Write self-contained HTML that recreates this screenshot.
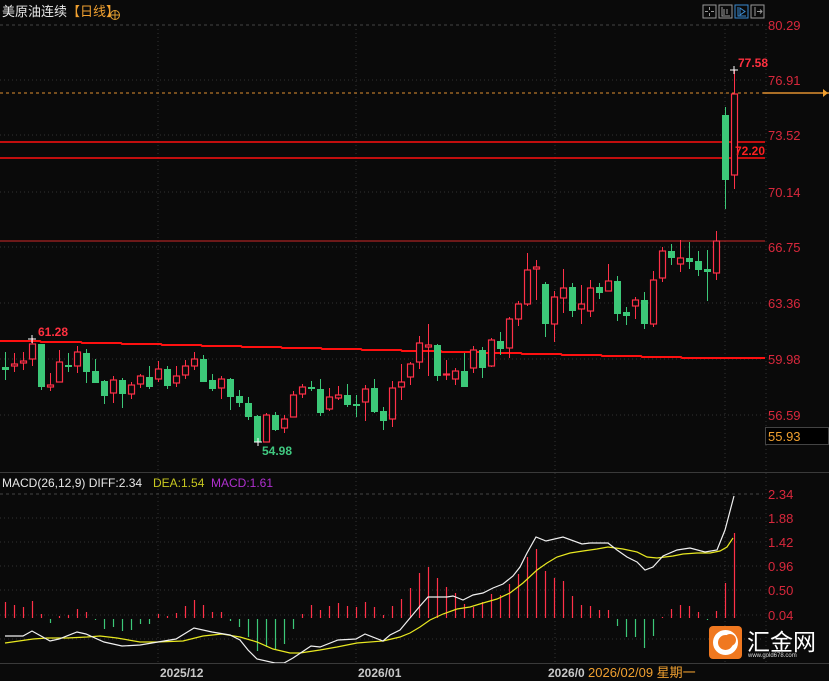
<!DOCTYPE html>
<html><head><meta charset="utf-8"><style>
html,body{margin:0;padding:0;background:#0a0a0a;width:829px;height:681px;overflow:hidden}
svg{display:block}
text{font-family:"Liberation Sans","Noto Sans CJK SC",sans-serif}
</style></head><body>
<svg id="s" width="829" height="681" xmlns="http://www.w3.org/2000/svg">
<rect width="829" height="681" fill="#0a0a0a"/>
<text x="2" y="16" font-size="13" fill="#e8e8e8">美原油连续</text>
<text x="67" y="16" font-size="13" fill="#f0a030">【日线】</text>
<circle cx="115" cy="15" r="4.5" fill="none" stroke="#e0a030" stroke-width="1"/>
<line x1="110.5" y1="15" x2="119.5" y2="15" stroke="#e0a030"/>
<line x1="115" y1="10.5" x2="115" y2="19.5" stroke="#e0a030"/>
<line x1="0" y1="25" x2="763" y2="25" stroke="#444" stroke-dasharray="3,3"/>
<g stroke="#333" stroke-dasharray="1,3">
<line x1="0" y1="80" x2="763" y2="80"/><line x1="0" y1="135" x2="763" y2="135"/>
<line x1="0" y1="192" x2="763" y2="192"/><line x1="0" y1="247" x2="763" y2="247"/>
<line x1="0" y1="303" x2="763" y2="303"/><line x1="0" y1="359" x2="763" y2="359"/>
<line x1="0" y1="415" x2="763" y2="415"/>
<line x1="158" y1="25" x2="158" y2="663"/><line x1="356" y1="25" x2="356" y2="663"/><line x1="555" y1="25" x2="555" y2="663"/><line x1="725" y1="25" x2="725" y2="663"/>
<line x1="766" y1="25" x2="766" y2="663"/>
<line x1="0" y1="518" x2="763" y2="518"/><line x1="0" y1="542" x2="763" y2="542"/>
<line x1="0" y1="566" x2="763" y2="566"/><line x1="0" y1="590" x2="763" y2="590"/>
<line x1="0" y1="615" x2="763" y2="615"/><line x1="0" y1="639" x2="763" y2="639"/>
</g>
<line x1="0" y1="494" x2="763" y2="494" stroke="#444" stroke-dasharray="3,3"/>
<!-- toolbar -->
<g fill="none" stroke="#999">
<rect x="703" y="5" width="13" height="13"/><rect x="719" y="5" width="13" height="13"/>
<rect x="735" y="5" width="13" height="13" stroke="#3a8ad0"/><rect x="751" y="5" width="13" height="13"/>
<path d="M709.5 7v3M709.5 13v3M705 11.5h3M711 11.5h3"/>
<path d="M722 7v9h8M724 9v6M727 9v5" />
<path d="M738 7v9h8M740 8l5 3.5-5 3.5z" stroke="#3a8ad0"/>
<path d="M755 7v9M757 11.5h5M760 9.5l2 2-2 2"/>
</g>
<!-- axis labels -->
<g font-size="13" fill="#d8283c">
<text x="768" y="30">80.29</text><text x="768" y="85">76.91</text><text x="768" y="140">73.52</text>
<text x="768" y="197">70.14</text><text x="768" y="252">66.75</text><text x="768" y="308">63.36</text>
<text x="768" y="364">59.98</text><text x="768" y="420">56.59</text>
<text x="768" y="499">2.34</text><text x="768" y="523">1.88</text><text x="768" y="547">1.42</text>
<text x="768" y="571">0.96</text><text x="768" y="595">0.50</text><text x="768" y="620">0.04</text>
</g>
<rect x="765.5" y="427.5" width="63" height="17" fill="#000" stroke="#444"/>
<text x="768" y="441" font-size="13" fill="#f0a030">55.93</text>
<!-- lines -->
<line x1="0" y1="93" x2="763" y2="93" stroke="#e09030" stroke-dasharray="3,3"/>
<line x1="763" y1="93" x2="829" y2="93" stroke="#e09030" stroke-width="1.5"/>
<path d="M823 89l5 4-5 4z" fill="#f0a030"/>
<line x1="0" y1="142" x2="765" y2="142" stroke="#ff1010" stroke-width="1.5"/>
<line x1="0" y1="158" x2="765" y2="158" stroke="#ff1010" stroke-width="1.5"/>
<line x1="0" y1="241" x2="765" y2="241" stroke="#d02828" stroke-width="1"/>
<path d="M0 341L40 341L41 342L81 342L82 343L121 343L122 344L161 344L162 345L201 345L202 346L241 346L242 347L281 347L282 348L321 348L322 349L361 349L362 350L401 350L402 351L441 351L442 352L481 352L482 353L521 353L522 354L561 354L562 355L601 355L602 356L641 356L642 357L681 357L682 358L765 358" fill="none" stroke="#ff1010" stroke-width="2"/>
<g id="c"></g>
<g id="m"></g>
<line x1="0" y1="472.5" x2="829" y2="472.5" stroke="#3a3a3a"/>
<text x="2" y="487" font-size="12" fill="#e8e8e8">MACD(26,12,9) DIFF:2.34</text>
<text x="153" y="487" font-size="12" fill="#c8c820">DEA:1.54</text>
<text x="211" y="487" font-size="12" fill="#b030d0">MACD:1.61</text>
<polyline fill="none" stroke="#e8e820" stroke-width="1.2" points="5,643 33,639 47,638 67,638 87,637 100,636 117,638 140,642 157,642 183,641 203,636 222,634 240,637 257,642 273,649 290,653 300,653 320,650 337,647 357,643 383,641 400,637 410,633 420,627 430,620 443,614 457,609 470,607 483,603 497,599 510,593 523,583 537,570 547,563 557,557 570,553 583,551 597,549 608,547 623,549 637,552 647,557 657,558 673,556 683,554 697,553 710,553 720,551 727,547 733,538"/>
<polyline fill="none" stroke="#f0f0f0" stroke-width="1.2" points="5,636 23,636 32,631 41,636 50,641 59,639 77,632 86,634 104,642 122,646 140,645 158,642 176,639 194,628 212,632 230,635 240,640 248,650 257,659 275,663 284,663 293,658 302,652 311,646 320,647 338,640 356,639 365,634 383,641 390,635 400,630 410,618 420,606 428,597 440,597 447,597 453,596 463,600 473,595 483,593 493,588 503,584 513,576 520,567 527,553 536,537 546,541 563,537 582,544 590,543 608,543 617,550 627,557 637,562 645,570 653,567 663,556 677,550 690,548 705,552 717,550 725,530 734,496"/>
<!-- bottom axis -->
<line x1="0" y1="663.5" x2="829" y2="663.5" stroke="#3a3a3a"/>
<g font-size="12" font-weight="bold" fill="#c8c8c8">
<text x="160" y="677">2025/12</text><text x="358" y="677">2026/01</text><text x="548" y="677">2026/0</text>
</g>
<rect x="587" y="664" width="108" height="17" fill="#0a0a0a"/>
<text x="588" y="677" font-size="13" fill="#f0a030">2026/02/09 星期一</text>
<!-- logo -->
<rect x="709" y="626" width="33" height="33" rx="4" fill="#f07820"/>
<circle cx="725.5" cy="642.5" r="10" fill="none" stroke="#fff" stroke-width="5"/>
<circle cx="730" cy="640" r="6" fill="#f07820"/>
<text x="747" y="650" font-size="23" fill="#ffffff" font-family="Noto Sans CJK SC,sans-serif">汇金网</text>
<text x="748" y="657" font-size="6" fill="#ddd">www.gold678.com</text>
<!-- markers -->
<text x="38" y="336" font-size="12" font-weight="bold" fill="#ff3040">61.28</text>
<text x="262" y="455" font-size="12" font-weight="bold" fill="#40c880">54.98</text>
<text x="738" y="67" font-size="12" font-weight="bold" fill="#ff3040">77.58</text>
<text x="735" y="155" font-size="12" font-weight="bold" fill="#ff2020">72.20</text>
<g stroke="#fff"><path d="M28 339h8M32 335v8"/><path d="M254 442h8M258 438v8"/><path d="M730 70h8M734 66v8"/></g>
</svg>
<script>
var d=[
['g',367,369,352,380],['r',364,366,353,372],['r',361,363,352,370],['r',344,359,338,366],['g',344,386,344,390],
['r',385,387,373,391],['r',362,382,350,382],['g',365,366,353,372],['r',352,366,346,373],['g',353,371,349,383],
['g',371,382,359,383],['g',381,395,380,404],['r',380,393,376,403],['g',380,393,378,408],['r',385,394,382,399],
['r',376,384,374,388],['g',377,386,366,389],['r',369,379,361,382],['g',369,385,366,389],['r',376,383,366,387],
['r',366,375,360,379],['r',359,366,352,370],['g',359,381,355,382],['g',380,388,374,391],['r',379,388,376,399],
['g',379,396,378,410],['g',396,402,390,407],['g',403,416,397,420],['g',416,441,415,441],['r',415,442,413,442],
['g',415,429,412,431],['r',419,428,415,433],['r',395,417,391,417],['r',387,394,384,398],['g',387,388,381,391],
['g',389,412,379,416],['r',397,409,388,411],['r',395,398,386,400],['g',395,404,384,407],['g',404,405,395,417],
['r',389,402,385,421],['g',388,411,379,413],['g',411,420,407,430],['r',388,419,381,427],['r',382,387,364,400],
['r',364,377,362,385],['r',343,362,336,369],['r',345,347,324,376],['g',345,375,344,381],['r',374,375,360,380],
['r',371,379,368,385],['g',371,386,353,386],['r',350,368,346,373],['g',350,367,347,378],['r',340,366,338,367],
['g',341,348,332,355],['r',319,348,317,358],['r',304,319,301,326],['r',270,304,253,306],['r',267,269,260,300],
['g',284,323,282,337],['r',297,324,291,342],['r',288,298,269,313],['g',287,310,283,317],['r',304,309,285,324],
['r',288,311,280,317],['g',287,292,283,299],['r',281,291,264,291],['g',281,313,276,321],['g',312,315,307,325],
['r',300,306,297,319],['g',300,323,292,329],['r',280,324,271,327],['r',251,278,247,282],['g',251,257,244,265],
['r',258,264,240,272],['g',258,261,242,269],['g',261,269,251,276],['g',269,271,250,301],['r',241,273,231,280],
['g',115,179,107,209],['r',94,175,70,189]];
var h=[16,13,11,17,4,-4,2,3,9,6,-1,-10,-8,-12,-11,-5,-5,4,2,5,12,18,13,6,6,-2,-8,-18,-32,-28,-31,-25,-10,4,13,8,12,15,12,11,16,11,3,12,19,30,45,51,40,31,25,14,11,16,24,23,34,44,61,69,47,40,37,22,13,12,8,8,-7,-18,-18,-29,-17,1,9,13,12,6,-1,7,35,85];
var R='#ff3048',G='#3cc878',s='',m='';
for(var i=0;i<d.length;i++){var x=5.5+9*i,c=d[i],col=c[0]=='r'?R:G;
s+='<line x1="'+x+'" y1="'+c[3]+'" x2="'+x+'" y2="'+c[4]+'" stroke="'+col+'"/>';
var bh=Math.max(1,c[2]-c[1]);
if(c[0]=='r'){s+='<rect x="'+(x-3)+'" y="'+c[1]+'" width="6" height="'+bh+'" fill="#0a0a0a" stroke="'+col+'" stroke-width="1.2"/>';}
else{s+='<rect x="'+(x-3.5)+'" y="'+c[1]+'" width="7" height="'+(bh+1)+'" fill="'+col+'"/>';}
var v=h[i];if(v>0)m+='<line x1="'+x+'" y1="'+(618-v)+'" x2="'+x+'" y2="618" stroke="'+R+'" stroke-width="1.2"/>';
else m+='<line x1="'+x+'" y1="619" x2="'+x+'" y2="'+(619-v)+'" stroke="'+G+'" stroke-width="1.2"/>';}
document.getElementById('c').innerHTML=s;document.getElementById('m').innerHTML=m;
</script>
</body></html>
